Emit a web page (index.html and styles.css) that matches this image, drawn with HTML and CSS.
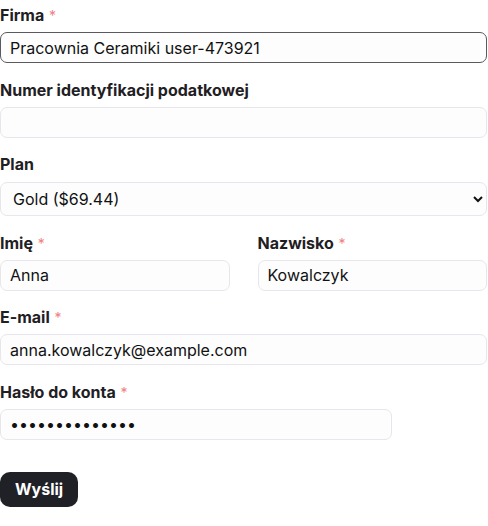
FILE: index.html
```html
<!DOCTYPE html>
<html lang="pl">
<head>
<meta charset="utf-8">
<title>Rejestracja firmy</title>
<link rel="stylesheet" href="styles.css">
</head>
<body>
<form class="signup">
  <div class="field">
    <label class="field-label" for="company">Firma <span class="req">*</span></label>
    <input class="control control-focus" id="company" type="text" value="Pracownia Ceramiki user-473921">
  </div>
  <div class="field">
    <label class="field-label" for="nip">Numer identyfikacji podatkowej</label>
    <input class="control" id="nip" type="text" value="">
  </div>
  <div class="field">
    <label class="field-label" for="plan">Plan</label>
    <select class="control control-select" id="plan">
      <option>Gold ($69.44)</option>
    </select>
  </div>
  <div class="field-row">
    <div class="field">
      <label class="field-label" for="first">Imię <span class="req">*</span></label>
      <input class="control" id="first" type="text" value="Anna">
    </div>
    <div class="field">
      <label class="field-label" for="last">Nazwisko <span class="req">*</span></label>
      <input class="control" id="last" type="text" value="Kowalczyk">
    </div>
  </div>
  <div class="field">
    <label class="field-label" for="email">E-mail <span class="req">*</span></label>
    <input class="control" id="email" type="email" value="anna.kowalczyk@example.com">
  </div>
  <div class="field field-narrow">
    <label class="field-label" for="pass">Hasło do konta <span class="req">*</span></label>
    <input class="control" id="pass" type="password" value="sekretnehaslo1">
  </div>
  <div class="actions">
    <button class="submit" type="button">Wyślij</button>
  </div>
</form>
</body>
</html>
```

FILE: styles.css
```css
* {
  box-sizing: border-box;
}

html, body {
  margin: 0;
  background: #ffffff;
}

body {
  font-family: Inter, "Noto Sans", sans-serif;
  color: #202124;
}

.signup {
  display: flex;
  flex-direction: column;
  gap: 14.5px;
  padding: 3px 1px 0 0;
}

.field {
  display: flex;
  flex-direction: column;
  gap: 5px;
}

.field-row {
  display: grid;
  grid-template-columns: 1fr 1fr;
  column-gap: 28px;
}

.field-narrow {
  width: 392px;
}

.field-label {
  display: block;
  height: 24px;
  font-size: 16px;
  line-height: 24px;
  font-weight: 700;
  color: #1f2023;
}

.req {
  color: #f08080;
  font-weight: 400;
  font-size: 14px;
  line-height: 1;
  margin-left: 1px;
}

.control {
  display: block;
  width: 100%;
  height: 31px;
  margin: 0;
  padding: 0 9px;
  font-family: Inter, "Noto Sans", sans-serif;
  font-size: 16px;
  color: #111111;
  background: #fdfdfe;
  border: 1px solid #e6e6ec;
  border-radius: 7px;
  outline: none;
}

.control-focus {
  border-color: #5a5a5e;
}

.control-select {
  height: 34px;
  margin-top: 1px;
  padding: 0 8px;
}

.actions {
  padding-top: 17.5px;
}

.submit {
  font-family: Inter, "Noto Sans", sans-serif;
  font-size: 16px;
  font-weight: 700;
  color: #ffffff;
  background: #202126;
  border: none;
  border-radius: 10px;
  height: 35px;
  padding: 0 15px;
}
```
